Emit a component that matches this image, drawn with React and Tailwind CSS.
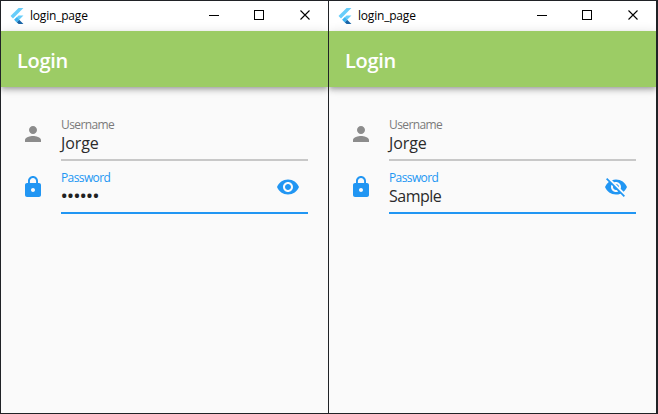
import React from "react";
import { MdPerson, MdLock, MdVisibility, MdVisibilityOff } from "react-icons/md";

function FlutterLogo() {
  return (
    <svg className="ml-2 h-4 w-4 shrink-0" viewBox="0 0 24 24">
      <path d="M14.314 0L2.3 12 6 15.7 21.684.013z" fill="#67cdfa" />
      <path d="M14.328 11.072L7.857 17.53l3.69 3.69L21.7 11.072z" fill="#67cdfa" />
      <path d="M11.547 21.22L14.327 24H21.7l-6.46-6.468z" fill="#1a66a8" />
      <path d="M7.857 17.53l3.69-3.69 3.69 3.69-3.69 3.69z" fill="#3fb4f0" />
    </svg>
  );
}

function TitleBar() {
  return (
    <div className="flex h-[30px] items-center bg-white">
      <FlutterLogo />
      <span className="ml-[5px] grow text-[12px] leading-4 tracking-[-0.2px] text-black">login_page</span>
      <svg className="h-[30px] w-[138px] shrink-0" viewBox="0 0 138 30" fill="none" stroke="#000" shapeRendering="crispEdges">
        <path d="M19 14.5h10" />
        <path d="M64.5 9.5h9v9h-9z" />
        <path d="M110.5 9.5l9 9M119.5 9.5l-9 9" shapeRendering="auto" strokeWidth="1.1" />
      </svg>
    </div>
  );
}

function Password({ visible }) {
  return visible ? (
    <span className="tracking-[-0.5px]">Sample</span>
  ) : (
    <span className="text-[17px] font-semibold tracking-[-0.05px] text-[#212121]">••••••</span>
  );
}

function Field({ icon: Icon, iconClass, label, labelClass, value, lineClass, trailing: Trailing }) {
  return (
    <div className="flex h-[53px]">
      <Icon className={"mt-[14px] h-6 w-6 shrink-0 " + iconClass} />
      <div className={"ml-4 flex h-[53px] w-[247px] border-b-2 " + lineClass}>
        <div className="grow pt-[9px]">
          <div className={"h-4 text-[12px] leading-4 " + labelClass}>{label}</div>
          <div className="h-5 text-[16px] leading-5 text-[#2b2b2b]">{value}</div>
        </div>
        {Trailing && <Trailing className="mr-2 mt-[14px] h-6 w-6 shrink-0 text-[#2196f3]" />}
      </div>
    </div>
  );
}

function LoginWindow({ visible }) {
  return (
    <div className="flex h-[412px] w-[327px] shrink-0 flex-col overflow-hidden bg-[#fafafa]">
      <TitleBar />
      <div className="flex h-14 shrink-0 items-center bg-[#9ccc65] pl-4 text-[20px] font-semibold leading-6 text-white shadow-[0_2px_4px_-1px_rgba(0,0,0,0.2),0_4px_5px_0_rgba(0,0,0,0.14),0_1px_10px_0_rgba(0,0,0,0.12)]">
        <span className="mt-1 tracking-[-0.3px]">Login</span>
      </div>
      <div className="pl-5 pt-[21px]">
        <Field
          icon={MdPerson}
          iconClass="text-[#8c8c8c]"
          label="Username"
          labelClass="text-[#7a7a7a] tracking-[-0.6px]"
          value={<span className="tracking-[-0.1px]">Jorge</span>}
          lineClass="border-[#c8c8c8]"
        />
        <Field
          icon={MdLock}
          iconClass="text-[#2196f3]"
          label="Password"
          labelClass="text-[#2196f3] tracking-[-0.6px]"
          value={<Password visible={visible} />}
          lineClass="border-[#2196f3]"
          trailing={visible ? MdVisibilityOff : MdVisibility}
        />
      </div>
    </div>
  );
}

export default function App() {
  return (
    <div className="flex h-[414px] w-[658px] gap-px bg-[#202226] pl-px pt-px font-['Open_Sans','Noto_Sans',sans-serif]">
      <LoginWindow visible={false} />
      <LoginWindow visible />
    </div>
  );
}
